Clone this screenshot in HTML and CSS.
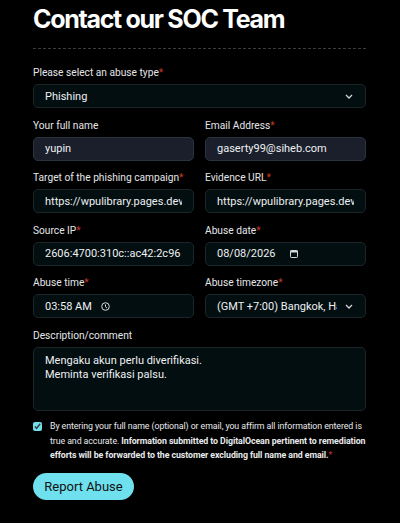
FILE: index.html
```html
<!DOCTYPE html>
<html lang="en">
<head>
  <meta charset="UTF-8">
  <title>Contact our SOC Team</title>
  <link rel="stylesheet" href="styles.css">
</head>
<body>
  <main class="page">
    <h1 class="title">Contact our SOC Team</h1>
    <hr class="divider">

    <form class="abuse-form">
      <div class="field full">
        <label>Please select an abuse type<span class="req">*</span></label>
        <select class="control">
          <option>Phishing</option>
          <option>Spam</option>
          <option>Malware</option>
        </select>
      </div>

      <div class="field">
        <label>Your full name</label>
        <input class="control filled" type="text" value="yupin">
      </div>
      <div class="field">
        <label>Email Address<span class="req">*</span></label>
        <input class="control filled" type="email" value="gaserty99@siheb.com">
      </div>

      <div class="field">
        <label>Target of the phishing campaign<span class="req">*</span></label>
        <input class="control" type="text" value="https://wpulibrary.pages.dev/amp">
      </div>
      <div class="field">
        <label>Evidence URL<span class="req">*</span></label>
        <input class="control" type="text" value="https://wpulibrary.pages.dev/amp">
      </div>

      <div class="field">
        <label>Source IP<span class="req">*</span></label>
        <input class="control" type="text" value="2606:4700:310c::ac42:2c96">
      </div>
      <div class="field">
        <label>Abuse date<span class="req">*</span></label>
        <div class="control picker">
          <input class="date" type="text" value="08/08/2026">
          <svg class="picker-icon" width="8" height="8" viewBox="0 0 8 8">
            <rect x="0.5" y="0.5" width="7" height="7" rx="0.8" fill="none" stroke="#d6dadc"/>
            <rect x="0.5" y="0.5" width="7" height="2" fill="#d6dadc"/>
          </svg>
        </div>
      </div>

      <div class="field">
        <label>Abuse time<span class="req">*</span></label>
        <div class="control picker">
          <input class="time" type="text" value="03:58 AM">
          <svg class="picker-icon" width="9" height="9" viewBox="0 0 9 9">
            <circle cx="4.5" cy="4.5" r="3.8" fill="none" stroke="#d6dadc"/>
            <path d="M4.5 2.4v2.3l1.5 1.4" fill="none" stroke="#d6dadc"/>
          </svg>
        </div>
      </div>
      <div class="field">
        <label>Abuse timezone<span class="req">*</span></label>
        <select class="control">
          <option>(GMT +7:00) Bangkok, Hanoi, Jakarta</option>
        </select>
      </div>

      <div class="field full">
        <label>Description/comment</label>
        <textarea class="control area">Mengaku akun perlu diverifikasi.
Meminta verifikasi palsu.</textarea>
      </div>

      <label class="consent full">
        <input type="checkbox" checked>
        <span>By entering your full name (optional) or email, you affirm all information entered is true and accurate. <b>Information submitted to DigitalOcean pertinent to remediation efforts will be forwarded to the customer excluding full name and email.</b><span class="req">*</span></span>
      </label>

      <div class="full">
        <button type="submit" class="submit">Report Abuse</button>
      </div>
    </form>
  </main>
</body>
</html>
```

FILE: styles.css
```css
html, body {
  margin: 0;
  background: #000;
}
body {
  font-family: Roboto, "Noto Sans", sans-serif;
  color: #e6e8ea;
}
.page {
  width: 333px;
  margin-left: 33px;
  padding-top: 4px;
}
.title {
  margin: 0;
  font-family: Inter, sans-serif;
  font-size: 25px;
  font-weight: 700;
  letter-spacing: -1.3px;
  line-height: 30px;
  color: #fff;
}
.divider {
  border: 0;
  border-top: 1px dashed #3a3d40;
  margin: 14px 0 17px;
}
.abuse-form {
  display: grid;
  grid-template-columns: 1fr 1fr;
  column-gap: 11px;
  row-gap: 10.5px;
}
.full {
  grid-column: 1 / -1;
}
.field label {
  display: block;
  font-size: 10.2px;
  line-height: 13px;
  margin-bottom: 5px;
  color: #e4e6e8;
}
.req {
  color: #c0392b;
}
.control {
  box-sizing: border-box;
  width: 100%;
  height: 24px;
  padding: 0 11px;
  background: #030e10;
  border: 1px solid #1c2629;
  border-radius: 5px;
  color: #eef0f2;
  font-family: inherit;
  font-size: 11px;
  outline: none;
}
select.control {
  appearance: none;
  padding-right: 28px;
  background-image: url("data:image/svg+xml;utf8,<svg xmlns='http://www.w3.org/2000/svg' width='8' height='5' viewBox='0 0 8 5'><path d='M1 1l3 3 3-3' fill='none' stroke='%23d0d4d6' stroke-width='1.3'/></svg>");
  background-repeat: no-repeat;
  background-position: right 12px center;
}
/* date / time: bare input plus a glyph right after the value */
.picker {
  display: flex;
  align-items: center;
}
.picker input {
  flex: none;
  height: 20px;
  padding: 0;
  border: 0;
  background: transparent;
  color: inherit;
  font: inherit;
  outline: none;
}
.picker .date {
  width: 60px;
  margin-right: 13px;
}
.picker .time {
  width: 48px;
  margin-right: 8px;
}
.picker-icon {
  flex: none;
}
.control.filled {
  background: #1a1f2b;
  border-color: #2c3340;
}
.control.area {
  height: 64px;
  padding: 6px 11px;
  line-height: 14px;
  resize: none;
}
.consent {
  display: flex;
  gap: 8px;
  align-items: flex-start;
  margin-top: -6px;
  font-size: 8.8px;
  letter-spacing: -0.08px;
  line-height: 14.5px;
  color: #e8eaec;
}
.consent input {
  margin: 3px 0 0;
  width: 9px;
  height: 9px;
  accent-color: #6fdfee;
  flex: none;
}
.consent b {
  font-weight: 700;
}
.submit {
  width: 101px;
  height: 27px;
  border: 0;
  border-radius: 14px;
  background: #6ee0ee;
  color: #111;
  font-family: Roboto, sans-serif;
  font-size: 13px;
  cursor: pointer;
}
```
